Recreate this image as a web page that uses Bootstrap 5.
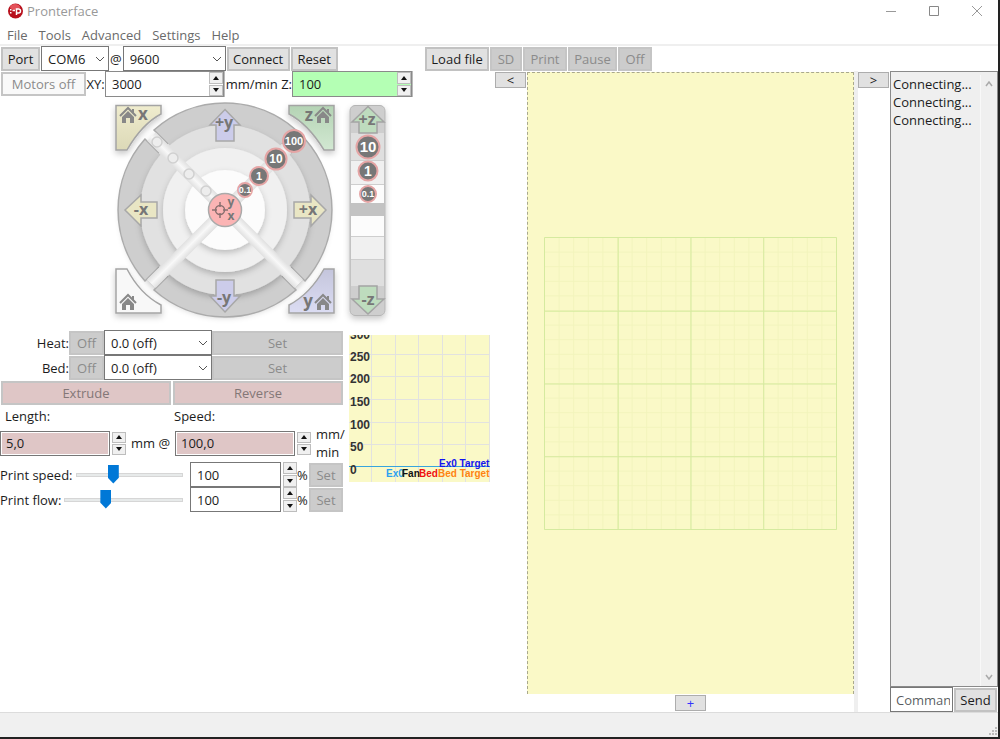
<!DOCTYPE html>
<html lang="en">
<head>
<meta charset="utf-8">
<meta name="viewport" content="width=device-width, initial-scale=1">
<title>Pronterface</title>
<link href="https://cdn.jsdelivr.net/npm/bootstrap@5.3.0/dist/css/bootstrap.min.css" rel="stylesheet">
<style>
  :root { --face:#e1e1e1; --edge:#adadad; --paper:#faf9c7; --rose:#dfc6c6; }
  body { font:13px/18px "Open Sans","Noto Sans",sans-serif; color:#1c1c1c; background:#fff; border-right:2px solid #222; border-bottom:2px solid #222; overflow:hidden; }
  .titlebar { height:22px; color:#999; }
  .titlebar button { border:0; background:none; padding:0; width:43px; height:22px; line-height:0; }
  .menubar { height:24px; padding:3px 0 0 7px; border-bottom:2px solid #efefef; }
  .menubar div { gap:11px; }
  .menubar a { color:#6a6a6a; text-decoration:none; }
  .btn { --bs-btn-font-size:13px; --bs-btn-line-height:18px; --bs-btn-padding-x:0; --bs-btn-padding-y:0; --bs-btn-border-radius:0; --bs-btn-border-width:2px;
    --bs-btn-bg:var(--face); --bs-btn-color:#1c1c1c; --bs-btn-border-color:#c2c2c2; --bs-btn-disabled-bg:#ccc; --bs-btn-disabled-color:#8b8b8b; --bs-btn-disabled-border-color:#c5c5c5; --bs-btn-disabled-opacity:1; height:24px; white-space:nowrap; }
  .btn-pale { --bs-btn-disabled-bg:#f9f9f9; }
  .btn-rose { --bs-btn-disabled-bg:var(--rose); --bs-btn-disabled-color:#837777; }
  .btn-fold { width:31px; height:16px; --bs-btn-line-height:12px; --bs-btn-border-width:1px; --bs-btn-border-color:var(--edge); margin:1px 1px 0 0; }
  .btn-add { --bs-btn-color:#33f; margin:1px 0; }
  .form-control, .form-select { border:1px solid #777; border-radius:0; font-size:13px; line-height:18px; color:#1c1c1c; height:25px; padding:0 6px; min-width:0; }
  .form-select { background-position:right 3px center; background-size:10px 10px; padding-right:16px;
    --bs-form-select-bg-img:url("data:image/svg+xml,%3csvg xmlns='http://www.w3.org/2000/svg' viewBox='0 0 10 10'%3e%3cpath fill='none' stroke='%23555' d='M1 3l4 4 4-4'/%3e%3c/svg%3e"); }
  .spinbox { border:1px solid #8a8a8a; box-shadow:1px 0 0 #bbb; }
  .spinbox .form-control { border:0; height:24px; background:transparent; }
  .green { background:#b4ffb4; }
  .form-control.rose-field { background:var(--rose); box-shadow:inset 0 0 0 1px #fff; width:110px; padding:0 5px; flex:none; }
  .form-control.rose-wide { width:120px; }
  .steps { width:14px; flex:none; gap:1px; }
  .steps-apart { margin:0 5px 0 2px; }
  .steps button { flex:1; padding:0; border:1px solid #bdbdbd; background:#f0f0f0; line-height:0; min-height:11px; }
  .steps svg { display:block; margin:auto; }
  .toolbar-left { width:425px; gap:1px; padding-left:1px; }
  .print-group { gap:1px; }
  .tools { height:25px; }
  .speeds { height:26px; padding-left:1px; }
  .left-pane { width:495px; }
  .lower { gap:6px; }
  .controls { width:343px; }
  .caption-col { width:69px; }
  .off { width:35px; }
  .set { width:34px; flex:none; }
  .temp { width:108px; }
  .pct { width:107px; flex:none; }
  .pct .form-control { width:91px; }
  .extrude { gap:2px; padding-left:1px; margin-top:1px; }
  .captions { padding:2px 0 0 5px; }
  .lengths { height:36px; margin-bottom:1px; }
  .rate { gap:7px; }
  .rate > label { margin-right:-4px; }
  input[type=range] { appearance:none; background:none; height:20px; min-width:0; width:0; margin:0; }
  input[type=range]::-webkit-slider-runnable-track { height:4px; background:#e7eaea; border:1px solid #d6d6d6; }
  input[type=range]::-webkit-slider-thumb { appearance:none; width:11px; height:19px; margin-top:-9px; background:#0078d7; clip-path:polygon(0 0,100% 0,100% 70%,50% 100%,0 70%); }
  .plate { background:var(--paper); border:1px dashed #a9a88c; border-bottom:0; min-height:0; }
  .plate svg { width:calc(100% - 32px); height:auto; }
  .sash { width:4px; background:#efefef; }
  .log-pane { width:108px; }
  .log { background:#efefef; border:1px solid #8a8a8a; padding:3px 0 0 2px; }
  .scroller { width:17px; border-left:1px solid #f8f8f8; }
  .scroller button { border:0; padding:0; background:none; height:18px; line-height:0; }
  .command { gap:1px; padding-right:1px; }
  .command .form-control { width:63px; flex:none; padding:0 2px 0 5px; }
  .status { height:25px; background:#f0f0f0; border-top:1px solid #dcdcdc; }
  .jog { margin-left:110px; }
  .jog text { font-family:"Open Sans","Noto Sans",sans-serif; font-weight:700; text-anchor:middle; fill:#777; }
  .jog .dot text { fill:#fff; font-family:"Liberation Sans",sans-serif; }
  .graph { margin-top:5px; }
  .graph text { font:bold 12px "Liberation Sans",Arial,sans-serif; fill:#333; }
  .graph .legend text { font-size:10px; }
</style>
</head>
<body class="vh-100 d-flex flex-column">
<svg width="0" height="0" class="position-absolute" aria-hidden="true">
  <symbol id="up" viewBox="0 0 6 4"><path d="M0 4 3 0 6 4Z" fill="#111"/></symbol>
  <symbol id="down" viewBox="0 0 6 4"><path d="M0 0 3 4 6 0Z" fill="#111"/></symbol>
</svg>

<header class="titlebar d-flex align-items-center flex-shrink-0">
  <svg class="ms-2 me-1" width="15" height="16" viewBox="0 0 15 16"><circle cx="7.500" cy="8" r="7.500" fill="#b8101c"/><ellipse cx="7" cy="4" rx="5" ry="3" fill="#e4525a"/><g fill="none" stroke="#fff" stroke-width="1.500"><path d="M4.500 7.500H7M8.500 12V6h2a1.800 1.800 0 0 1 0 4h-2"/></g><path d="M2 6h1.500v1.500H2zM2 9h1.500v1.500H2z" fill="#fff"/></svg>
  <span class="me-auto">Pronterface</span>
  <button aria-label="Minimize"><svg width="10" height="10"><path d="M0 5.500h10" stroke="#999"/></svg></button>
  <button aria-label="Maximize"><svg width="10" height="10"><path d="M.5.5h9v9h-9z" fill="none" stroke="#888"/></svg></button>
  <button aria-label="Close"><svg width="10" height="10"><path d="M0 0l10 10M10 0 0 10" stroke="#999"/></svg></button>
</header>
<nav class="menubar d-flex align-items-center flex-shrink-0">
  <div class="d-flex"><a href="#">File</a><a href="#">Tools</a><a href="#">Advanced</a><a href="#">Settings</a><a href="#">Help</a></div>
</nav>

<div class="tools d-flex align-items-center flex-shrink-0">
  <div class="toolbar-left d-flex align-items-center flex-shrink-0">
    <button class="btn" style="width:39px">Port</button>
    <select class="form-select" style="width:68px" aria-label="Port"><option>COM6</option></select>
    <label for="baud">@</label>
    <select class="form-select" id="baud" style="width:103px"><option>9600</option></select>
    <button class="btn" style="width:63px">Connect</button>
    <button class="btn" style="width:47px">Reset</button>
  </div>
  <div class="print-group d-flex">
    <button class="btn" style="width:64px">Load file</button>
    <button class="btn" style="width:32px" disabled>SD</button>
    <button class="btn" style="width:44px" disabled>Print</button>
    <button class="btn" style="width:49px" disabled>Pause</button>
    <button class="btn" style="width:34px" disabled>Off</button>
  </div>
</div>

<main class="d-flex flex-grow-1">
  <section class="left-pane flex-shrink-0">
    <div class="speeds d-flex align-items-center">
      <button class="btn btn-pale" style="width:85px" disabled>Motors off</button>
      <label for="xy" class="text-center" style="width:19px">XY:</label>
      <div class="spinbox d-flex" style="width:119px"><input class="form-control" id="xy" value="3000"><div class="steps d-flex flex-column"><button aria-label="Increase XY speed"><svg width="6" height="4"><use href="#up"/></svg></button><button aria-label="Decrease XY speed"><svg width="6" height="4"><use href="#down"/></svg></button></div></div>
      <label for="zs" class="text-end text-nowrap" style="width:68px">mm/min Z:</label>
      <div class="spinbox green d-flex" style="width:120px"><input class="form-control" id="zs" value="100"><div class="steps d-flex flex-column"><button aria-label="Increase Z speed"><svg width="6" height="4"><use href="#up"/></svg></button><button aria-label="Decrease Z speed"><svg width="6" height="4"><use href="#down"/></svg></button></div></div>
    </div>

    <svg class="jog d-block" width="285" height="233" viewBox="110 97 285 233" role="img" aria-label="Jog controls">
      <defs>
        <filter id="sh" x="-20%" y="-20%" width="140%" height="140%"><feDropShadow dx="0" dy="3" stdDeviation="3" flood-opacity=".22"/></filter>
        <clipPath id="disc"><circle r="106"/></clipPath>
        <linearGradient id="ly" x2="0" y2="1"><stop stop-color="#efecce"/><stop offset="1" stop-color="#dcd9b7"/></linearGradient>
        <linearGradient id="lg" x2="0" y2="1"><stop stop-color="#b4d3b4"/><stop offset="1" stop-color="#d2e8d2"/></linearGradient>
        <linearGradient id="lb" x2="0" y2="1"><stop stop-color="#c4c5dc"/><stop offset="1" stop-color="#dcddf3"/></linearGradient>
        <linearGradient id="bar" x2="0" y2="1"><stop stop-color="#e0e0e0"/><stop offset=".5" stop-color="#f8f8f8"/><stop offset="1" stop-color="#e0e0e0"/></linearGradient>
        <g id="sector"><path d="M-71-80A107 107 0 0 1 71-80L55-64A84 84 0 0 0-55-64Z" fill="#cecece"/><path d="M-57-66L-71-80A107 107 0 0 1 71-80L57-66" fill="none" stroke="#ababab" stroke-width="1.500"/></g>
        <g id="house"><path d="M-8 1 0-7 8 1M5-6v4" fill="none" stroke="#888" stroke-width="2"/><path d="M-6 2 0-4 6 2v6H2V3h-4v5h-4Z" fill="#888"/></g>
      </defs>
      <g transform="translate(225 210)">
        <circle r="104" fill="#f4f4f4" filter="url(#sh)"/>
        <use href="#sector"/><use href="#sector" transform="rotate(90)"/><use href="#sector" transform="rotate(180)"/><use href="#sector" transform="rotate(270)"/>
        <g clip-path="url(#disc)">
          <circle r="85" fill="#e1e1e1" filter="url(#sh)"/>
          <circle r="62" fill="#f0f0f0" filter="url(#sh)"/>
          <circle r="40" fill="#fcfcfc" filter="url(#sh)"/>
        </g>
        <g transform="rotate(45)"><rect x="-104" y="-6" width="208" height="12" fill="url(#bar)"/></g>
        <g transform="rotate(-45)"><rect x="-104" y="-6" width="208" height="12" fill="url(#bar)"/></g>
        <circle r="16.500" fill="#fbb4b4" stroke="#aaa" stroke-width="1.500"/>
        <g fill="none" stroke="#8b7070" stroke-width="1.500"><circle cx="-5" r="4.500"/><path d="M-13 0h5M-2 0h5M-5-8v5M-5 3v5"/></g>
        <text x="6" y="-4" font-size="12">y</text><text x="6" y="10" font-size="12">x</text>
      </g>
      <g fill="#ededed" stroke="#d0d0d0" stroke-width="1.500"><circle cx="157" cy="142" r="5"/><circle cx="173" cy="158" r="5"/><circle cx="189" cy="174" r="5"/><circle cx="206" cy="191" r="5"/></g>
      <g stroke="#a4a4a4" stroke-width="1.500" filter="url(#sh)">
        <path d="M116 105.500H161V114Q142 124 127 150H116Z" fill="url(#ly)"/>
        <path d="M334 105.500H289V114Q308 124 324 150H334Z" fill="url(#lg)"/>
        <path d="M116 313H161V305Q140 294 127 269H116Z" fill="#f8f8f8"/>
        <path d="M334 313H289V305Q310 294 324 269H334Z" fill="url(#lb)"/>
      </g>
      <g stroke="#a8a8a8" stroke-width="1.500">
        <path d="M225 109.500 240 125H234V141H216V125H210Z" fill="#ccccea"/>
        <path d="M225 312 240 296H234V280H216V296H210Z" fill="#ccccea"/>
        <path d="M125 210 141 195V202H157V218H141V226Z" fill="#e9e6c4"/>
        <path d="M326 210 311 195V202H294V218H311V226Z" fill="#e9e6c4"/>
      </g>
      <use href="#house" x="128" y="115"/><use href="#house" x="323" y="115"/><use href="#house" x="128" y="302"/><use href="#house" x="323" y="302"/>
      <g font-size="17"><text x="143" y="120">x</text><text x="309" y="121">z</text><text x="308" y="307">y</text></g>
      <g font-size="16"><text x="224" y="128">+y</text><text x="224" y="303">-y</text><text x="141" y="215">-x</text><text x="308" y="215">+x</text></g>
      <g class="dot" fill="#777" stroke="#e5a5a5" stroke-width="2">
        <circle cx="294" cy="141" r="11"/><circle cx="276" cy="159" r="10.500"/><circle cx="259" cy="176" r="9"/><circle cx="245" cy="190" r="7"/>
        <g stroke="none"><text x="294" y="145" font-size="11">100</text><text x="276" y="163" font-size="12">10</text><text x="259" y="180" font-size="11">1</text><text x="245" y="193" font-size="9">0.1</text></g>
      </g>
      <rect x="350" y="105.500" width="35" height="210" rx="5" fill="#cecece" stroke="#b5b5b5" filter="url(#sh)"/>
      <g><path d="M351 133h33v27h-33zM351 259h33v27h-33z" fill="#dfdfdf"/><path d="M351 160h33v24h-33zM351 237h33v22h-33z" fill="#f0f0f0"/><path d="M351 184h33v19h-33zM351 216h33v21h-33z" fill="#fcfcfc"/><path d="M351 203h33v13h-33z" fill="#c3c3c3"/><path d="M351 160.500h33M351 184.500h33M351 236.500h33M351 259.500h33" stroke="#cecece"/></g>
      <g fill="#bedcbe" stroke="#a4a4a4" stroke-width="1.500"><path d="M368 106.500 384 122H377V133H359V122H352Z"/><path d="M368 314 384 299H377V286H359V299H352Z"/></g>
      <g font-size="16"><text x="367" y="125">+z</text><text x="368" y="305">-z</text></g>
      <g class="dot" fill="#777" stroke="#e5a5a5" stroke-width="2"><circle cx="368" cy="147" r="11.500"/><circle cx="368" cy="171" r="9.500"/><circle cx="368" cy="194" r="8"/>
        <g stroke="none"><text x="368" y="152" font-size="15">10</text><text x="368" y="176" font-size="14">1</text><text x="368" y="197" font-size="9">0.1</text></g></g>
    </svg>

    <div class="lower d-flex align-items-start">
      <div class="controls flex-shrink-0">
        <div class="d-flex align-items-center">
          <label for="heat" class="caption-col text-end">Heat:</label><button class="btn off" disabled>Off</button>
          <select id="heat" class="form-select temp"><option>0.0 (off)</option></select><button class="btn flex-grow-1" disabled>Set</button>
        </div>
        <div class="d-flex align-items-center">
          <label for="bed" class="caption-col text-end">Bed:</label><button class="btn off" disabled>Off</button>
          <select id="bed" class="form-select temp"><option>0.0 (off)</option></select><button class="btn flex-grow-1" disabled>Set</button>
        </div>
        <div class="extrude d-flex"><button class="btn btn-rose w-50" disabled>Extrude</button><button class="btn btn-rose w-50" disabled>Reverse</button></div>
        <div class="captions row g-0"><label for="len" class="col-6">Length:</label><label for="spd" class="col-6">Speed:</label></div>
        <div class="lengths d-flex align-items-center">
          <input id="len" class="form-control rose-field" value="5,0">
          <div class="steps steps-apart d-flex flex-column"><button aria-label="Increase length"><svg width="6" height="4"><use href="#up"/></svg></button><button aria-label="Decrease length"><svg width="6" height="4"><use href="#down"/></svg></button></div>
          <span class="text-nowrap flex-shrink-0" style="width:44px">mm @</span>
          <input id="spd" class="form-control rose-field rose-wide" value="100,0">
          <div class="steps steps-apart d-flex flex-column"><button aria-label="Increase speed"><svg width="6" height="4"><use href="#up"/></svg></button><button aria-label="Decrease speed"><svg width="6" height="4"><use href="#down"/></svg></button></div>
          <span>mm/<br>min</span>
        </div>
        <div class="rate d-flex align-items-center">
          <label for="ps" class="text-nowrap">Print speed:</label><input type="range" id="ps" class="flex-grow-1" min="1" max="300" value="100">
          <div class="d-flex align-items-center"><div class="d-flex pct"><input class="form-control" value="100" aria-label="Print speed percent"><div class="steps d-flex flex-column ms-auto"><button aria-label="Faster"><svg width="6" height="4"><use href="#up"/></svg></button><button aria-label="Slower"><svg width="6" height="4"><use href="#down"/></svg></button></div></div>
          <span style="width:12px">%</span><button class="btn set" disabled>Set</button></div>
        </div>
        <div class="rate d-flex align-items-center">
          <label for="pf" class="text-nowrap">Print flow:</label><input type="range" id="pf" class="flex-grow-1" min="1" max="300" value="100">
          <div class="d-flex align-items-center"><div class="d-flex pct"><input class="form-control" value="100" aria-label="Print flow percent"><div class="steps d-flex flex-column ms-auto"><button aria-label="More flow"><svg width="6" height="4"><use href="#up"/></svg></button><button aria-label="Less flow"><svg width="6" height="4"><use href="#down"/></svg></button></div></div>
          <span style="width:12px">%</span><button class="btn set" disabled>Set</button></div>
        </div>
      </div>
      <svg class="graph" width="141" height="147" viewBox="0 0 141 147" role="img" aria-label="Temperature graph">
        <rect width="141" height="147" fill="#faf9c7"/>
        <path d="M22.500 0v147M46.500 0v147M69.500 0v147M93.500 0v147M116.500 0v147M140.500 0v147M0 19.500h141M0 41.500h141M0 64.500h141M0 87.500h141M0 109.500h141" stroke="#e2e2e0"/>
        <path d="M0 131.500h141" stroke="#38a5dd"/>
        <text x="1" y="4">300</text><text x="1" y="26">250</text><text x="1" y="48">200</text><text x="1" y="71">150</text><text x="1" y="94">100</text><text x="1" y="116">50</text><text x="1" y="139">0</text>
        <g class="legend"><text x="90" y="132" style="fill:#1414ee">Ex0 Target</text><text x="37" y="142" style="fill:#2ba0f0">Ex0</text><text x="53" y="142" style="fill:#111">Fan</text><text x="70" y="142" style="fill:#f01010">Bed</text><text x="89" y="142" style="fill:#ff8411">Bed Target</text></g>
      </svg>
    </div>
  </section>

  <button class="btn btn-fold flex-shrink-0">&lt;</button>
  <section class="d-flex flex-column flex-grow-1" style="padding-top:1px">
    <div class="plate flex-grow-1 d-flex align-items-center justify-content-center">
      <svg viewBox="0 0 294 294" role="img" aria-label="Build plate grid">
        <defs><pattern id="minor" width="14.650" height="14.650" patternUnits="userSpaceOnUse"><path d="M.5 0V15M0 .5H15" fill="none" stroke="#f2f4bc"/></pattern></defs>
        <rect width="294" height="294" fill="url(#minor)"/>
        <path d="M.5.5h293v293H.5ZM74.500 0v294M147.500 0v294M220.500 0v294M0 74.500h294M0 147.500h294M0 220.500h294" fill="none" stroke="#d5ea9f"/>
      </svg>
    </div>
    <button class="btn btn-fold btn-add align-self-center">+</button>
  </section>
  <div class="sash flex-shrink-0"></div>
  <button class="btn btn-fold flex-shrink-0">&gt;</button>
  <aside class="log-pane flex-shrink-0 d-flex flex-column">
    <div class="log d-flex flex-grow-1">
      <div class="flex-grow-1">Connecting...<br>Connecting...<br>Connecting...</div>
      <div class="scroller d-flex flex-column justify-content-between">
        <button aria-label="Scroll up"><svg width="8" height="6"><path d="M1 5l3-4 3 4" fill="none" stroke="#aaa" stroke-width="1.500"/></svg></button>
        <button aria-label="Scroll down"><svg width="8" height="6"><path d="M1 1l3 4 3-4" fill="none" stroke="#aaa" stroke-width="1.500"/></svg></button>
      </div>
    </div>
    <div class="command d-flex align-items-center"><input class="form-control" placeholder="Comman" aria-label="Command"><button class="btn flex-grow-1">Send</button></div>
  </aside>
</main>
<footer class="status flex-shrink-0 d-flex justify-content-end align-items-end">
  <svg width="11" height="11"><path d="M8 1h2v2H8zM5 4h2v2H5zM8 4h2v2H8zM2 7h2v2H2zM5 7h2v2H5zM8 7h2v2H8z" fill="#bbb"/></svg>
</footer>
<script src="https://cdn.jsdelivr.net/npm/bootstrap@5.3.0/dist/js/bootstrap.bundle.min.js"></script>
</body>
</html>
